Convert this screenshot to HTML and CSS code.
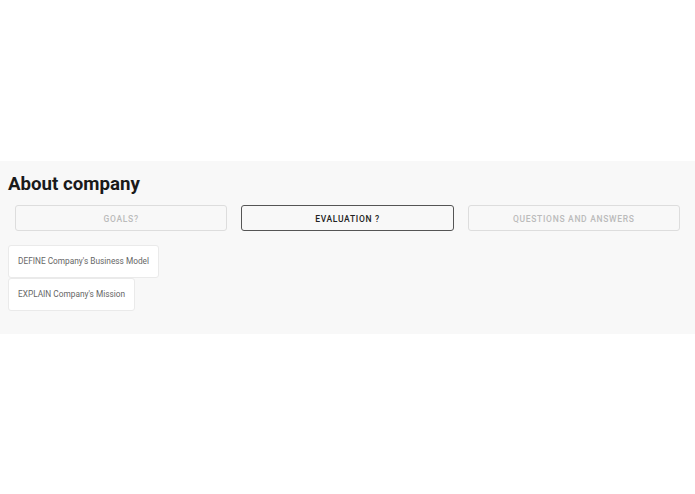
FILE: index.html
```html
<!DOCTYPE html>
<html lang="en">
<head>
    <meta charset="UTF-8">
    <meta name="viewport" content="width=device-width, initial-scale=1.0">
    <title>About company</title>
    <link rel="stylesheet" href="styles.css">
</head>
<body>
    <div class="section">
        <h1>About company</h1>
        <div class="tabs">
            <button class="tab">GOALS?</button>
            <button class="tab active">EVALUATION ?</button>
            <button class="tab">QUESTIONS AND ANSWERS</button>
        </div>
        <div class="cards">
            <div class="card">DEFINE Company's Business Model</div>
            <div class="card">EXPLAIN Company's Mission</div>
        </div>
    </div>
</body>
</html>
```

FILE: styles.css
```css
body {
    font-family: Roboto, Arial, sans-serif;
    background-color: #fff;
    margin: 0;
    padding-top: 161px;
}
.section {
    background: #f8f8f8;
    padding: 12px 8px 23px;
}
.section h1 {
    margin: 0;
    font-size: 18.7px;
    font-weight: 700;
    line-height: 22px;
    color: #1a1a1a;
}
.tabs {
    display: flex;
    margin-top: 10px;
}
.tab {
    flex: 1;
    margin: 0 7px;
    height: 26px;
    padding: 1px 0 0;
    background: transparent;
    border: 1px solid #ddd;
    border-radius: 3px;
    font-family: Roboto, Arial, sans-serif;
    font-size: 8.5px;
    font-weight: 500;
    letter-spacing: 0.7px;
    color: #bbb;
    cursor: pointer;
}
.tab.active {
    border-color: #555;
    color: #222;
}
.cards {
    margin-top: 14px;
    display: flex;
    flex-direction: column;
    align-items: flex-start;
}
.card {
    background: #fff;
    border: 1px solid #eaeaea;
    border-radius: 3px;
    padding: 10px 9px;
    font-size: 8.3px;
    line-height: 11px;
    color: #666;
}
```
